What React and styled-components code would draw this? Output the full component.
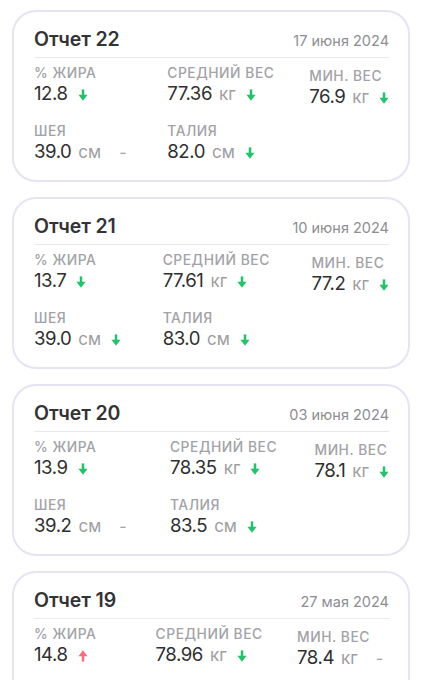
import React from "react";
import styled, { createGlobalStyle } from "styled-components";

const GlobalStyle = createGlobalStyle`
  body {
    margin: 0;
    background: #ffffff;
    font-family: "Inter", "Noto Sans", sans-serif;
    -webkit-font-smoothing: antialiased;
  }
`;

const reports = [
  {
    id: 22,
    date: "17 июня 2024",
    stats: [
      { label: "% жира", value: "12.8", trend: "down" },
      { label: "средний вес", value: "77.36", unit: "кг", trend: "down" },
      { label: "мин. вес", value: "76.9", unit: "кг", trend: "down" },
      { label: "шея", value: "39.0", unit: "см", trend: "none" },
      { label: "талия", value: "82.0", unit: "см", trend: "down" },
    ],
  },
  {
    id: 21,
    date: "10 июня 2024",
    stats: [
      { label: "% жира", value: "13.7", trend: "down" },
      { label: "средний вес", value: "77.61", unit: "кг", trend: "down" },
      { label: "мин. вес", value: "77.2", unit: "кг", trend: "down" },
      { label: "шея", value: "39.0", unit: "см", trend: "down" },
      { label: "талия", value: "83.0", unit: "см", trend: "down" },
    ],
  },
  {
    id: 20,
    date: "03 июня 2024",
    stats: [
      { label: "% жира", value: "13.9", trend: "down" },
      { label: "средний вес", value: "78.35", unit: "кг", trend: "down" },
      { label: "мин. вес", value: "78.1", unit: "кг", trend: "down" },
      { label: "шея", value: "39.2", unit: "см", trend: "none" },
      { label: "талия", value: "83.5", unit: "см", trend: "down" },
    ],
  },
  {
    id: 19,
    date: "27 мая 2024",
    stats: [
      { label: "% жира", value: "14.8", trend: "up" },
      { label: "средний вес", value: "78.96", unit: "кг", trend: "down" },
      { label: "мин. вес", value: "78.4", unit: "кг", trend: "none" },
      { label: "шея", value: "39.2", unit: "см", trend: "down" },
      { label: "талия", value: "84.0", unit: "см", trend: "down" },
    ],
  },
];

// small filled arrow, green down / red up
const Arrow = ({ up }) => (
  <ArrowIcon viewBox="0 0 10 12" $up={up}>
    <rect x="3.75" y="0.4" width="2.5" height="6.6" />
    <polygon points="0.4,5.8 9.6,5.8 5,11.7" />
  </ArrowIcon>
);

const Trend = ({ trend }) => {
  if (trend === "none") return <Dash>-</Dash>;
  return <Arrow up={trend === "up"} />;
};

const App = () => {
  return (
    <>
      <GlobalStyle />
      <Page>
        {reports.map((r) => (
          <Card key={r.id}>
            <Header>
              <Title>Отчет {r.id}</Title>
              <DateText>{r.date}</DateText>
            </Header>
            <Stats>
              {r.stats.map((s, i) => (
                <Stat key={i} $shift={i === 2}>
                  <Label>{s.label}</Label>
                  <ValueRow>
                    <Value>{s.value}</Value>
                    {s.unit ? <Unit>{s.unit}</Unit> : null}
                    <Trend trend={s.trend} />
                  </ValueRow>
                </Stat>
              ))}
            </Stats>
          </Card>
        ))}
      </Page>
    </>
  );
};

const Page = styled.main`
  display: flex;
  flex-direction: column;
  gap: 15px;
  padding: 10px 12px 20px;
`;

const Card = styled.section`
  background: #ffffff;
  border: 2px solid #e5e3f4;
  border-radius: 24px;
  padding: 15px 19px 17px 20px;
`;

const Header = styled.div`
  display: flex;
  justify-content: space-between;
  align-items: baseline;
  padding-bottom: 6px;
  border-bottom: 1px solid #e9e9ec;
  margin-bottom: 7px;
`;

const Title = styled.h2`
  margin: 0;
  font-size: 19.5px;
  line-height: 24px;
  font-weight: 600;
  color: #333336;
  letter-spacing: -0.1px;
`;

const DateText = styled.span`
  font-size: 14.5px;
  color: #8d8d92;
  font-weight: 400;
`;

const Stats = styled.div`
  display: grid;
  grid-template-columns: auto auto auto;
  justify-content: space-between;
  row-gap: 18px;
`;

const Stat = styled.div`
  display: flex;
  flex-direction: column;
  margin-top: ${(p) => (p.$shift ? "3px" : "0")};
  margin-bottom: ${(p) => (p.$shift ? "-3px" : "0")};
`;

const Label = styled.span`
  font-size: 13.8px;
  line-height: 16px;
  font-weight: 500;
  text-transform: uppercase;
  color: #a2a2a7;
  letter-spacing: 0.55px;
`;

const ValueRow = styled.div`
  display: flex;
  align-items: center;
  height: 24px;
`;

const Value = styled.span`
  font-size: 18.6px;
  line-height: 24px;
  color: #2f2f32;
  letter-spacing: -0.45px;
`;

const Unit = styled.span`
  margin-left: 7px;
  font-size: 17px;
  color: #9d9da2;
  font-weight: 400;
  padding-top: 2px;
`;

const ArrowIcon = styled.svg`
  width: 10px;
  height: 12px;
  margin-left: 10px;
  margin-top: 3px;
  fill: ${(p) => (p.$up ? "#f0707c" : "#27c06d")};
  transform: ${(p) => (p.$up ? "rotate(180deg)" : "none")};
`;

const Dash = styled.span`
  margin: 0 6px 0 18px;
  font-size: 16px;
  color: #a4a4a8;
  padding-top: 2px;
`;

export default App;
